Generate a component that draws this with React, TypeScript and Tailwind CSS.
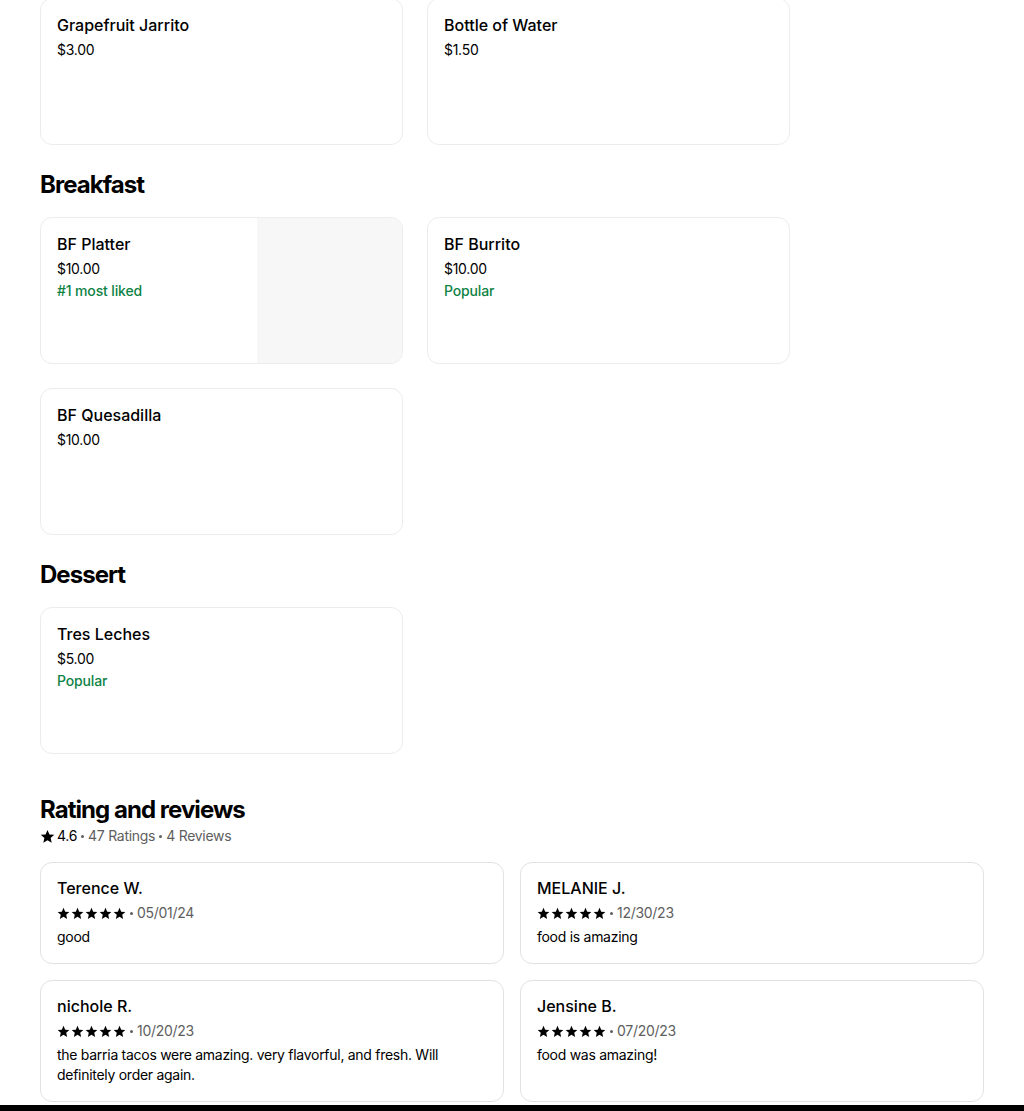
import React from "react";

type Item = { name: string; price: string; tag?: string; image?: boolean };

const drinks: Item[] = [
  { name: "Grapefruit Jarrito", price: "$3.00" },
  { name: "Bottle of Water", price: "$1.50" },
];

const breakfast: Item[] = [
  { name: "BF Platter", price: "$10.00", tag: "#1 most liked", image: true },
  { name: "BF Burrito", price: "$10.00", tag: "Popular" },
  { name: "BF Quesadilla", price: "$10.00" },
];

const dessert: Item[] = [{ name: "Tres Leches", price: "$5.00", tag: "Popular" }];

const reviews = [
  { name: "Terence W.", date: "05/01/24", text: "good" },
  { name: "MELANIE J.", date: "12/30/23", text: "food is amazing" },
  {
    name: "nichole R.",
    date: "10/20/23",
    text: "the barria tacos were amazing. very flavorful, and fresh. Will definitely order again.",
  },
  { name: "Jensine B.", date: "07/20/23", text: "food was amazing!" },
];

function Star({ size = 12 }: { size?: number }) {
  return (
    <svg width={size} height={size} viewBox="0 0 24 24" fill="currentColor">
      <path d="M12 1.5l3.1 7.1 7.7.7-5.8 5.1 1.7 7.6L12 18l-6.7 4 1.7-7.6-5.8-5.1 7.7-.7z" />
    </svg>
  );
}

// small middle dot used between meta items
function Dot() {
  return <span className="mx-[4px] inline-block h-[3px] w-[3px] rounded-full bg-[#5e5e5e]"></span>;
}

function MenuCard({ item }: { item: Item }) {
  return (
    <div className="flex h-[147px] overflow-hidden rounded-xl border border-[#ececec] bg-white">
      <div className="flex-1 px-4 pt-4">
        <div className="text-base font-medium leading-5 text-black">{item.name}</div>
        <div className="mt-[5px] text-sm leading-5 tracking-[-0.02em] text-black">{item.price}</div>
        {item.tag && (
          <div className="mt-[2px] text-sm font-medium leading-5 tracking-[-0.01em] text-[#0e8345]">
            {item.tag}
          </div>
        )}
      </div>
      {/* image placeholder */}
      {item.image && <div className="w-[145px] bg-[#f7f7f7]"></div>}
    </div>
  );
}

function MenuGrid({ items }: { items: Item[] }) {
  return (
    <div className="grid w-[750px] grid-cols-2 gap-6">
      {items.map((item) => (
        <MenuCard key={item.name} item={item} />
      ))}
    </div>
  );
}

export default function App() {
  return (
    <div
      className="min-h-[1111px] bg-white"
      style={{ fontFamily: "Inter, 'Liberation Sans', sans-serif" }}
    >
      <div className="-mt-[2px] px-10">
        <MenuGrid items={drinks} />

        <h2 className="mt-6 text-2xl font-bold leading-8 tracking-[-0.04em] text-black">Breakfast</h2>
        <div className="mt-4">
          <MenuGrid items={breakfast} />
        </div>

        <h2 className="mt-6 text-2xl font-bold leading-8 tracking-[-0.04em] text-black">Dessert</h2>
        <div className="mt-4">
          <MenuGrid items={dessert} />
        </div>

        <h2 className="mt-10 text-2xl font-bold leading-8 tracking-[-0.04em] text-black">
          Rating and reviews
        </h2>
        <div className="flex items-center text-sm leading-5 tracking-[-0.02em] text-[#5e5e5e]">
          <span className="text-black">
            <Star size={15} />
          </span>
          <span className="ml-[2px] text-black">4.6</span>
          <Dot />
          <span>47 Ratings</span>
          <Dot />
          <span>4 Reviews</span>
        </div>

        <div className="mt-4 grid grid-cols-2 gap-4 pb-[3px]">
          {reviews.map((r) => (
            <div key={r.name} className="rounded-xl border border-[#e2e2e2] bg-white px-4 pb-4 pt-[15px]">
              <div className="text-base font-medium leading-5 text-black">{r.name}</div>
              <div className="mt-[5px] flex h-5 items-center text-sm tracking-[-0.02em] text-[#5e5e5e]">
                <span className="flex gap-[1px] text-black">
                  {[0, 1, 2, 3, 4].map((i) => (
                    <Star key={i} size={13} />
                  ))}
                </span>
                <Dot />
                <span>{r.date}</span>
              </div>
              <div className="mt-1 text-sm leading-5 tracking-[-0.02em] text-black">{r.text}</div>
            </div>
          ))}
        </div>
      </div>
      <div className="h-[6px] bg-black"></div>
    </div>
  );
}
